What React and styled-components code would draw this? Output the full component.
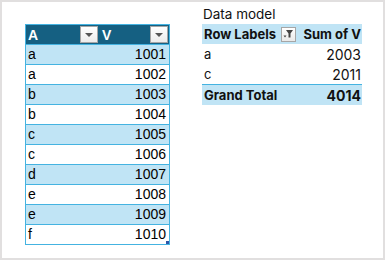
import React from 'react';
import styled, { createGlobalStyle } from 'styled-components';

const GlobalStyle = createGlobalStyle`
  html, body {
    margin: 0;
    padding: 0;
    background: #ffffff;
  }
  body {
    font-family: "Liberation Sans", Arial, sans-serif;
    color: #000;
  }
`;

const Frame = styled.div`
  box-sizing: border-box;
  width: 385px;
  height: 260px;
  border: 2px solid #e1dfdf;
  padding: 2px 0 0 23px;
  display: flex;
  align-items: flex-start;
  gap: 32px;
  background: #fff;
`;

const Table = styled.div`
  position: relative;
  margin-top: 20px;
  width: 143px;
  border: 1px solid #44b3e1;
  display: grid;
  grid-template-columns: 73px 70px;
  font-size: 14px;
`;

const Cell = styled.div`
  box-sizing: border-box;
  height: 20px;
  display: flex;
  align-items: center;
  justify-content: ${(p) => (p.$num ? 'flex-end' : 'space-between')};
  padding: ${(p) => (p.$num ? '0 3px 0 0' : '0 0 0 2px')};
  background: ${(p) => (p.$band ? '#c0e4f5' : '#ffffff')};
  border-top: 1px solid #44b3e1;
  line-height: 19px;
`;

const HeadCell = styled.div`
  box-sizing: border-box;
  height: 19px;
  display: flex;
  align-items: center;
  justify-content: space-between;
  padding: 0 1px 0 ${(p) => (p.$pad ? p.$pad : 2)}px;
  background: #156082;
  color: #fff;
  font-weight: bold;
`;

const DropButton = styled.div`
  box-sizing: border-box;
  width: 18px;
  height: 17px;
  border: 1px solid #a6a6a6;
  background: linear-gradient(#ffffff, #ececec);
  display: flex;
  align-items: center;
  justify-content: center;
`;

const Arrow = styled.div`
  width: 0;
  height: 0;
  border-left: 4px solid transparent;
  border-right: 4px solid transparent;
  border-top: 4px solid #555;
  margin-top: 1px;
`;

const Handle = styled.div`
  position: absolute;
  right: 0;
  bottom: 0;
  width: 3px;
  height: 3px;
  background: #2f55a8;
`;

const PivotColumn = styled.div`
  display: flex;
  flex-direction: column;
  width: 160px;
`;

const Caption = styled.div`
  height: 20px;
  line-height: 20px;
  font-family: Inter, "Liberation Sans", sans-serif;
  font-size: 13.5px;
  padding-left: 1px;
  color: #111;
`;

const PivotRow = styled.div`
  box-sizing: border-box;
  height: ${(p) => (p.$total ? 21 : 20)}px;
  display: grid;
  grid-template-columns: 96px 64px;
  align-items: center;
  background: ${(p) => (p.$band ? '#c0e4f5' : '#ffffff')};
  border-top: ${(p) => (p.$total ? '1px solid #44b3e1' : 'none')};
  font-family: Inter, "Liberation Sans", sans-serif;
  font-size: 13px;
  font-weight: ${(p) => (p.$bold ? 700 : 400)};
  color: #111;
`;

const PivotLabel = styled.div`
  display: flex;
  align-items: center;
  justify-content: space-between;
  padding-left: 2px;
  padding-right: 2px;
`;

const PivotValue = styled.div`
  text-align: right;
  padding-right: 1px;
  font-size: ${(p) => (p.$head ? 13 : 14)}px;
`;

const FilterButton = styled.div`
  box-sizing: border-box;
  width: 15px;
  height: 15px;
  border: 1px solid #a6a6a6;
  background: linear-gradient(#ffffff, #e9e9e9);
  display: flex;
  align-items: center;
  justify-content: center;
`;

const rows = [
  ['a', 1001], ['a', 1002], ['b', 1003], ['b', 1004], ['c', 1005],
  ['c', 1006], ['d', 1007], ['e', 1008], ['e', 1009], ['f', 1010],
];

const FilterIcon = () => (
  <svg width="11" height="10" viewBox="0 0 11 10">
    <path d="M3 1 H10 L7.5 4.5 V8.5 H5.5 V4.5 Z" fill="#444" />
    <path d="M0.5 6.5 H3.5 L2 8.5 Z" fill="#444" />
  </svg>
);

export default function App() {
  return (
    <>
      <GlobalStyle />
      <Frame>
        <Table>
          <HeadCell>
            A
            <DropButton><Arrow /></DropButton>
          </HeadCell>
          <HeadCell $pad={3}>
            V
            <DropButton><Arrow /></DropButton>
          </HeadCell>
          {rows.map(([a, v], i) => (
            <React.Fragment key={i}>
              <Cell $band={i % 2 === 0}>{a}</Cell>
              <Cell $band={i % 2 === 0} $num>{v}</Cell>
            </React.Fragment>
          ))}
          <Handle />
        </Table>
        <PivotColumn>
          <Caption>Data model</Caption>
          <PivotRow $band $bold>
            <PivotLabel>
              Row Labels
              <FilterButton><FilterIcon /></FilterButton>
            </PivotLabel>
            <PivotValue $head>Sum of V</PivotValue>
          </PivotRow>
          <PivotRow>
            <PivotLabel>a</PivotLabel>
            <PivotValue>2003</PivotValue>
          </PivotRow>
          <PivotRow>
            <PivotLabel>c</PivotLabel>
            <PivotValue>2011</PivotValue>
          </PivotRow>
          <PivotRow $band $bold $total>
            <PivotLabel>Grand Total</PivotLabel>
            <PivotValue>4014</PivotValue>
          </PivotRow>
        </PivotColumn>
      </Frame>
    </>
  );
}
